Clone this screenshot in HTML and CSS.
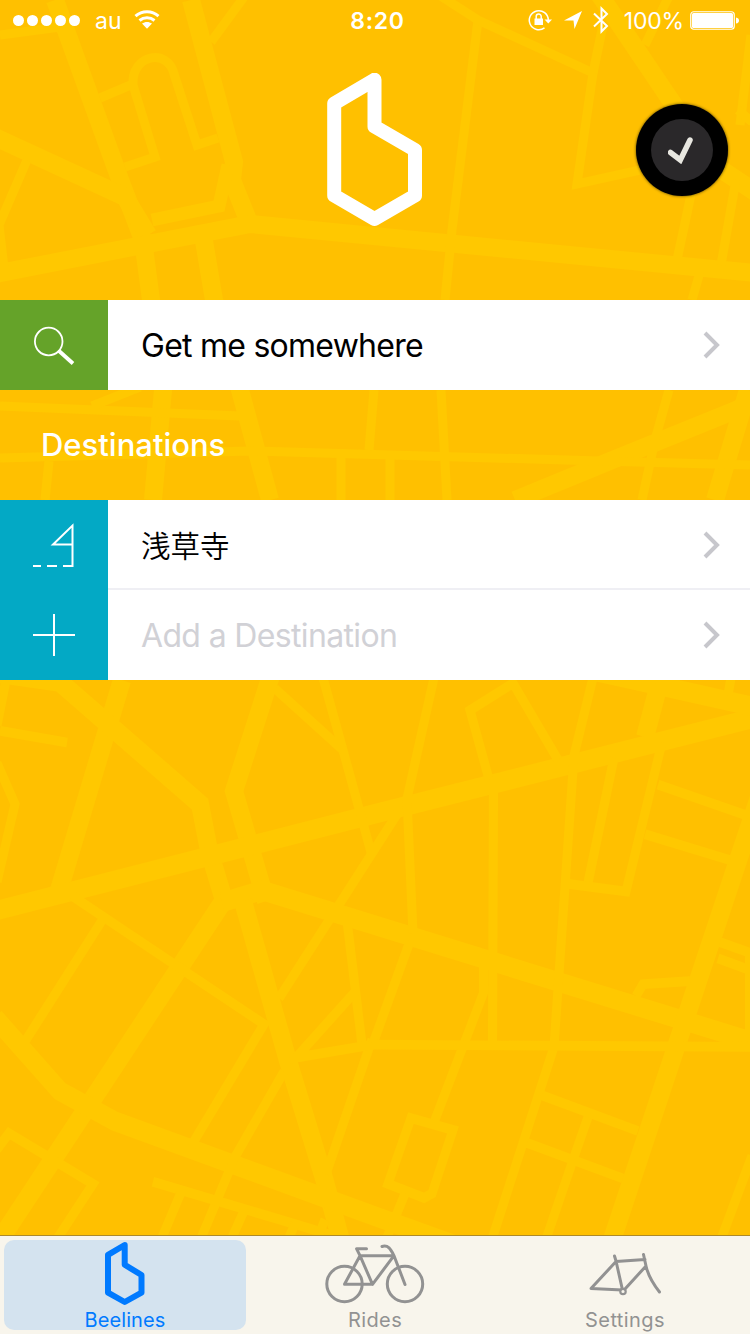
FILE: index.html
```html
<!DOCTYPE html>
<html lang="en">
<head>
    <meta charset="UTF-8">
    <meta name="viewport" content="width=device-width, initial-scale=1.0">
    <title>Beeline</title>
    <link rel="stylesheet" href="styles.css">
</head>
<body>
    <svg class="map" viewBox="0 0 750 1334" aria-hidden="true">
        <!-- upper part, main roads -->
        <g class="road-main">
            <path d="M55 0L122 185L143 240L151 300L163 390L153 500"/>
            <path d="M191 0L234 162L232 180L250 225"/>
            <path d="M203 235L214 300L240 390L270 500"/>
            <path d="M-5 137L125 197L148 235"/>
            <path d="M-5 274L250 224L755 273"/>
            <path d="M595 -12L684 120"/>
            <path d="M722 170L755 192"/>
            <path d="M515 500L610 461L731 412L755 402"/>
            <path d="M748 390L715 500"/>
            <path class="road-mid" d="M152 220L219 206L228 165"/>
        </g>
        <!-- upper part, side streets -->
        <g class="road-side">
            <path d="M125 167L155 157L133 85C131 54 168 48 174 74L197 145L218 138"/>
            <path d="M100 98L133 84"/>
            <path d="M27 160L-1 225L4 268"/>
            <path d="M0 35L60 27"/>
            <path d="M244 -3L211 42"/>
            <path d="M478 20L452 230L445 300"/>
            <path d="M436 -7L478 20L593 73L577 184L640 170"/>
            <path d="M603 25L593 73"/>
            <path d="M668 -2L645 45"/>
            <path d="M751 35L740 125"/>
            <path d="M738 110L752 122"/>
            <path d="M692 190L677 260M736 180L721 265M700 272L692 300"/>
            <path d="M0 406L240 416"/>
            <path d="M92 406L140 387"/>
            <path d="M0 458L250 451L600 461L750 465"/>
            <path d="M49 461L45 500"/>
            <path d="M374 390L369 450M341 457V500M390 459V500M441 390L447 500"/>
            <path d="M669 390L655 440L642 500"/>
        </g>
        <!-- lower part -->
        <g transform="translate(0 680) scale(1 1.079) translate(0 -680)">
            <g class="road-main">
                <path d="M122 680L58 878"/>
                <path d="M275 664L234 783L266 885"/>
                <path d="M0 674L60 682L200 795L209 838L224 884L-3 1203"/>
                <path d="M-5 894L375 804L755 715"/>
                <path d="M222 886L262 875L755 1016"/>
                <path d="M243 885L288 1033L325 1145L344 1210"/>
                <path d="M-5 993L60 1061L115 1089L375 1177L480 1212"/>
                <path d="M765 772L608 1210"/>
                <path d="M590 671L678 689L755 705"/>
                <path d="M659 684L645 733"/>
            </g>
            <g class="road-side">
                <path d="M6 680L-3 722"/>
                <path d="M0 727L67 738"/>
                <path d="M-3 757L15 795L-3 867"/>
                <path d="M72 880L264 999L191 1112"/>
                <path d="M102 903L25 1015"/>
                <path d="M284 1043L235 1122L198 1204"/>
                <path d="M372 1013L326 1138"/>
                <path d="M-3 1115L9 1100L93 1147L55 1201"/>
                <path d="M153 1145L330 1194"/>
                <path d="M181 1155L160 1201M245 1170L230 1201M295 1184L287 1201M325 1180L316 1201"/>
                <path d="M323 678L343 745L372 843"/>
                <path d="M275 688L343 745"/>
                <path d="M398 803L279 975"/>
                <path d="M347 903L362 1018"/>
                <path d="M355 969L296 1030L372 1018"/>
                <path d="M434 678L407 790L413 915"/>
                <path d="M410 922L373 1017"/>
                <path d="M558 754L513 683L470 708L489 772"/>
                <path d="M493.500 780L492.500 1017"/>
                <path d="M483.500 940V970L434 1090"/>
                <path d="M593 678L574 750L554 1020L490 1204"/>
                <path d="M372 1018L750 1020"/>
                <path d="M614 752L588 868"/>
                <path d="M662 738L626 876L568 869"/>
                <path d="M658 777L748 806M645 823L730 847"/>
                <path d="M720 923L750 933M718 938L750 949"/>
                <path d="M749.500 930V1010"/>
                <path d="M636 973L643 962L690 959"/>
                <path d="M731 678L728 694"/>
                <path d="M411 1086L453 1097L432 1156L424 1160L388 1147Z"/>
                <path d="M405 1156L385 1201"/>
                <path d="M542 1065L638 1098M527 1109L623 1142"/>
                <path d="M588 1085L573 1125L545 1201"/>
                <path d="M752 1121L720 1201"/>
            </g>
        </g>
    </svg>

    <div class="app">
        <div class="status-bar">
            <div class="status-left">
                <span class="signal"><i></i><i></i><i></i><i></i><i></i></span>
                <span class="carrier">au</span>
                <svg class="wifi" width="26" height="20" viewBox="0 0 26 20">
                    <path d="M1.500 6.200C8 .2 18 .2 24.500 6.200M5.500 10.500C10 6.700 16 6.700 20.500 10.500" fill="none" stroke="#fff" stroke-width="3"/>
                    <path d="M8 13.600C11 11.300 15 11.300 18 13.600L13 18.800Z" fill="#fff"/>
                </svg>
            </div>
            <div class="status-time">8:20</div>
            <div class="status-right">
                <svg width="24" height="22" viewBox="0 0 24 22">
                    <path d="M20.300 11A9.500 9.500 0 1 0 16.500 18.800" fill="none" stroke="#fff" stroke-width="1.500"/>
                    <path d="M16.500 10.500H24L20.300 14.500Z" fill="#fff"/>
                    <path d="M6.500 9.500H15V16H6.500Z" fill="#fff"/>
                    <path d="M8.200 10V7.500A2.500 2.500 0 0 1 13.200 7.500V10" fill="none" stroke="#fff" stroke-width="1.500"/>
                </svg>
                <svg class="arrow" width="18" height="18" viewBox="0 0 18 18">
                    <path d="M0 9.500L18 0L10.500 18L9.500 9.500Z" fill="#fff"/>
                </svg>
                <svg class="bluetooth" width="16" height="28" viewBox="0 0 16 28">
                    <path d="M1 7.500L14 20L8.500 25.500V2.500L14 8L1 20.500" fill="none" stroke="#fff" stroke-width="2"/>
                </svg>
                <span class="percent">100%</span>
                <svg class="battery" width="49" height="19" viewBox="0 0 49 19">
                    <rect x=".75" y=".75" width="43.500" height="17.500" rx="3" fill="none" stroke="#fff" stroke-width="1.200"/>
                    <rect x="2" y="2" width="41" height="15" rx="1.500" fill="#fff"/>
                    <path d="M46 6.500Q49 7 49 9.500T46 12.500Z" fill="#fff"/>
                </svg>
            </div>
        </div>

        <div class="header">
            <svg class="logo" width="96" height="154" viewBox="0 0 96 154">
                <path d="M47.500 6.700L7.200 30.500V122.500L47.500 146L88 122.500V77L47.500 53.500Z"/>
            </svg>
            <div class="device">
                <div class="device-screen">
                    <svg width="28" height="28" viewBox="0 0 28 28">
                        <path d="M2.500 16.500L12.300 24L22 4"/>
                    </svg>
                </div>
            </div>
        </div>

        <div class="row">
            <div class="row-icon search">
                <svg width="44" height="44" viewBox="0 0 44 44">
                    <circle cx="16.700" cy="18.500" r="13.800" stroke-width="1.800"/>
                    <path d="M26.500 27.500L41 40.500" stroke-width="3.800"/>
                </svg>
            </div>
            <div class="row-body">
                <span class="row-text">Get me somewhere</span>
                <svg class="chevron" width="18" height="28" viewBox="0 0 18 28"><path d="M2 2L14 14L2 26"/></svg>
            </div>
        </div>

        <h2 class="section-title">Destinations</h2>

        <div class="row">
            <div class="row-icon">
                <svg width="44" height="48" viewBox="0 0 44 48">
                    <path d="M1 45H9M15 45H25M31 45H40.500V4.500L21 23.500H40" stroke-width="2"/>
                </svg>
            </div>
            <div class="row-body divided">
                <span class="row-text jp">浅草寺</span>
                <svg class="chevron" width="18" height="28" viewBox="0 0 18 28"><path d="M2 2L14 14L2 26"/></svg>
            </div>
        </div>
        <div class="row">
            <div class="row-icon">
                <svg width="42" height="42" viewBox="0 0 42 42">
                    <path d="M0 21H42M21 0V42" stroke-width="2"/>
                </svg>
            </div>
            <div class="row-body">
                <span class="row-text placeholder">Add a Destination</span>
                <svg class="chevron" width="18" height="28" viewBox="0 0 18 28"><path d="M2 2L14 14L2 26"/></svg>
            </div>
        </div>

        <div class="tab-bar">
            <div class="tab active">
                <svg class="tab-logo" width="42" height="66" viewBox="0 0 42 66">
                    <path d="M20.700 4L4 13.800V51.700L20.700 61L37.500 51.700V34L20.700 23.800Z"/>
                </svg>
                <span class="tab-label beelines">Beelines</span>
            </div>
            <div class="tab">
                <svg width="102" height="66" viewBox="0 0 102 66">
                    <circle cx="20.500" cy="43" r="17.700"/>
                    <circle cx="81" cy="43" r="17.700"/>
                    <path d="M42.500 7.700H32.500L36 14.700L48.500 43.300H20.500L36 14.700H70L48.500 43.300M58 5.500C64.500 3.500 67 9 70 14.700L81 43.500"/>
                </svg>
                <span class="tab-label">Rides</span>
            </div>
            <div class="tab">
                <svg class="frame" width="74" height="66" viewBox="0 0 74 66">
                    <path d="M26.500 15L28 20L34.500 49L3 47.500L28 20.500L57 18.500M55.500 13.500L58 25L37 48M58 25C60 34 66 44 71.500 51"/>
                    <circle cx="35" cy="50.500" r="2.700"/>
                </svg>
                <span class="tab-label">Settings</span>
            </div>
        </div>
    </div>
</body>
</html>
```
FILE: styles.css
```css
* {
    margin: 0;
    padding: 0;
    box-sizing: border-box;
}

body {
    font-family: Inter, 'Noto Sans CJK JP', sans-serif;
    background: #ffc000;
    width: 750px;
    height: 1334px;
    overflow: hidden;
    position: relative;
}

svg {
    display: block;
    flex: none;
}

/* map behind the whole screen */
.map {
    position: absolute;
    top: 0;
    left: 0;
    width: 750px;
    height: 1334px;
}

.map path {
    fill: none;
    stroke: #ffc800;
}

.road-main path {
    stroke-width: 18px;
}

.road-main .road-mid {
    stroke-width: 13px;
}

.road-side path {
    stroke-width: 9px;
}

.app {
    position: relative;
    display: flex;
    flex-direction: column;
    height: 100%;
}

.status-bar {
    display: flex;
    align-items: center;
    height: 40px;
    padding: 0 11px 0 13px;
    color: #fff;
    font-size: 23px;
}

.status-left,
.status-right {
    display: flex;
    align-items: center;
    flex: 1;
}

.status-right {
    justify-content: flex-end;
}

.signal {
    display: flex;
    gap: 3px;
}

.signal i {
    width: 11px;
    height: 11px;
    border-radius: 50%;
    background: #fff;
}

.carrier {
    margin-left: 15px;
    padding-top: 2px;
}

.wifi {
    margin-left: 12px;
}

.status-time {
    padding: 2px 0 0 3px;
    font-weight: 600;
    letter-spacing: 0.7px;
}

.arrow {
    margin-left: 12px;
}

.bluetooth {
    margin-left: 11px;
}

.percent {
    margin-left: 15px;
    margin-right: 6px;
    padding-top: 2px;
    letter-spacing: -0.2px;
}

.header {
    position: relative;
    display: flex;
    justify-content: center;
    height: 260px;
    padding-top: 33px;
}

.logo path {
    fill: none;
    stroke: #fff;
    stroke-width: 14px;
    stroke-linejoin: round;
}

.device {
    position: absolute;
    top: 64px;
    right: 22px;
    display: flex;
    align-items: center;
    justify-content: center;
    width: 92px;
    height: 92px;
    border-radius: 50%;
    background: #000;
    box-shadow: 0 0 3px rgba(0,0,0,0.7);
}

.device-screen {
    display: flex;
    align-items: center;
    justify-content: center;
    width: 62px;
    height: 62px;
    border-radius: 50%;
    background: #2a282a;
}

.device-screen path {
    fill: none;
    stroke: #e8e7e0;
    stroke-width: 5.5px;
    stroke-linecap: round;
}

.row {
    display: flex;
    height: 90px;
    background: #fff;
}

.row-icon {
    display: flex;
    align-items: center;
    justify-content: center;
    width: 108px;
    background: #03a9c5;
}

.row-icon.search {
    background: #65a329;
}

.row-icon path,
.row-icon circle {
    fill: none;
    stroke: #fff;
}

.row-body {
    flex: 1;
    display: flex;
    align-items: center;
    justify-content: space-between;
    padding: 0 29px 0 33px;
}

.row-body.divided {
    box-shadow: inset 0 -2px #efeff4;
}

.row-text {
    font-size: 32px;
    letter-spacing: -0.75px;
    color: #000;
}

.row-text.jp {
    font-family: 'Noto Sans CJK JP', sans-serif;
    font-size: 29.5px;
    font-weight: 350;
    letter-spacing: 0;
    padding-bottom: 2px;
}

.row-text.placeholder {
    letter-spacing: -0.65px;
    color: #d1d1d6;
}

.chevron path {
    fill: none;
    stroke: #c7c7cc;
    stroke-width: 4px;
}

.section-title {
    height: 110px;
    padding-left: 41px;
    line-height: 110px;
    font-size: 31px;
    font-weight: 500;
    color: #fff;
}

.tab-bar {
    display: flex;
    gap: 8px;
    height: 99px;
    margin-top: auto;
    padding: 4px;
    border-top: 1px solid #ad8a2a;
    background: #f8f5ec;
}

.tab {
    flex: 1;
    display: flex;
    flex-direction: column;
    align-items: center;
    height: 90px;
    padding-top: 1px;
    border-radius: 10px;
    color: #929292;
}

.tab.active {
    background: #d4e3ef;
    color: #007aff;
}

.tab path,
.tab circle {
    fill: none;
    stroke: currentColor;
    stroke-width: 3px;
    stroke-linejoin: round;
    stroke-linecap: round;
}

.tab .tab-logo path {
    stroke-width: 6px;
}

.tab .frame circle {
    stroke-width: 2.2px;
    fill: #f8f5ec;
}

.tab-label {
    line-height: 26px;
    font-size: 20px;
    letter-spacing: 0.4px;
}

.tab-label.beelines {
    letter-spacing: 0.1px;
}
```
